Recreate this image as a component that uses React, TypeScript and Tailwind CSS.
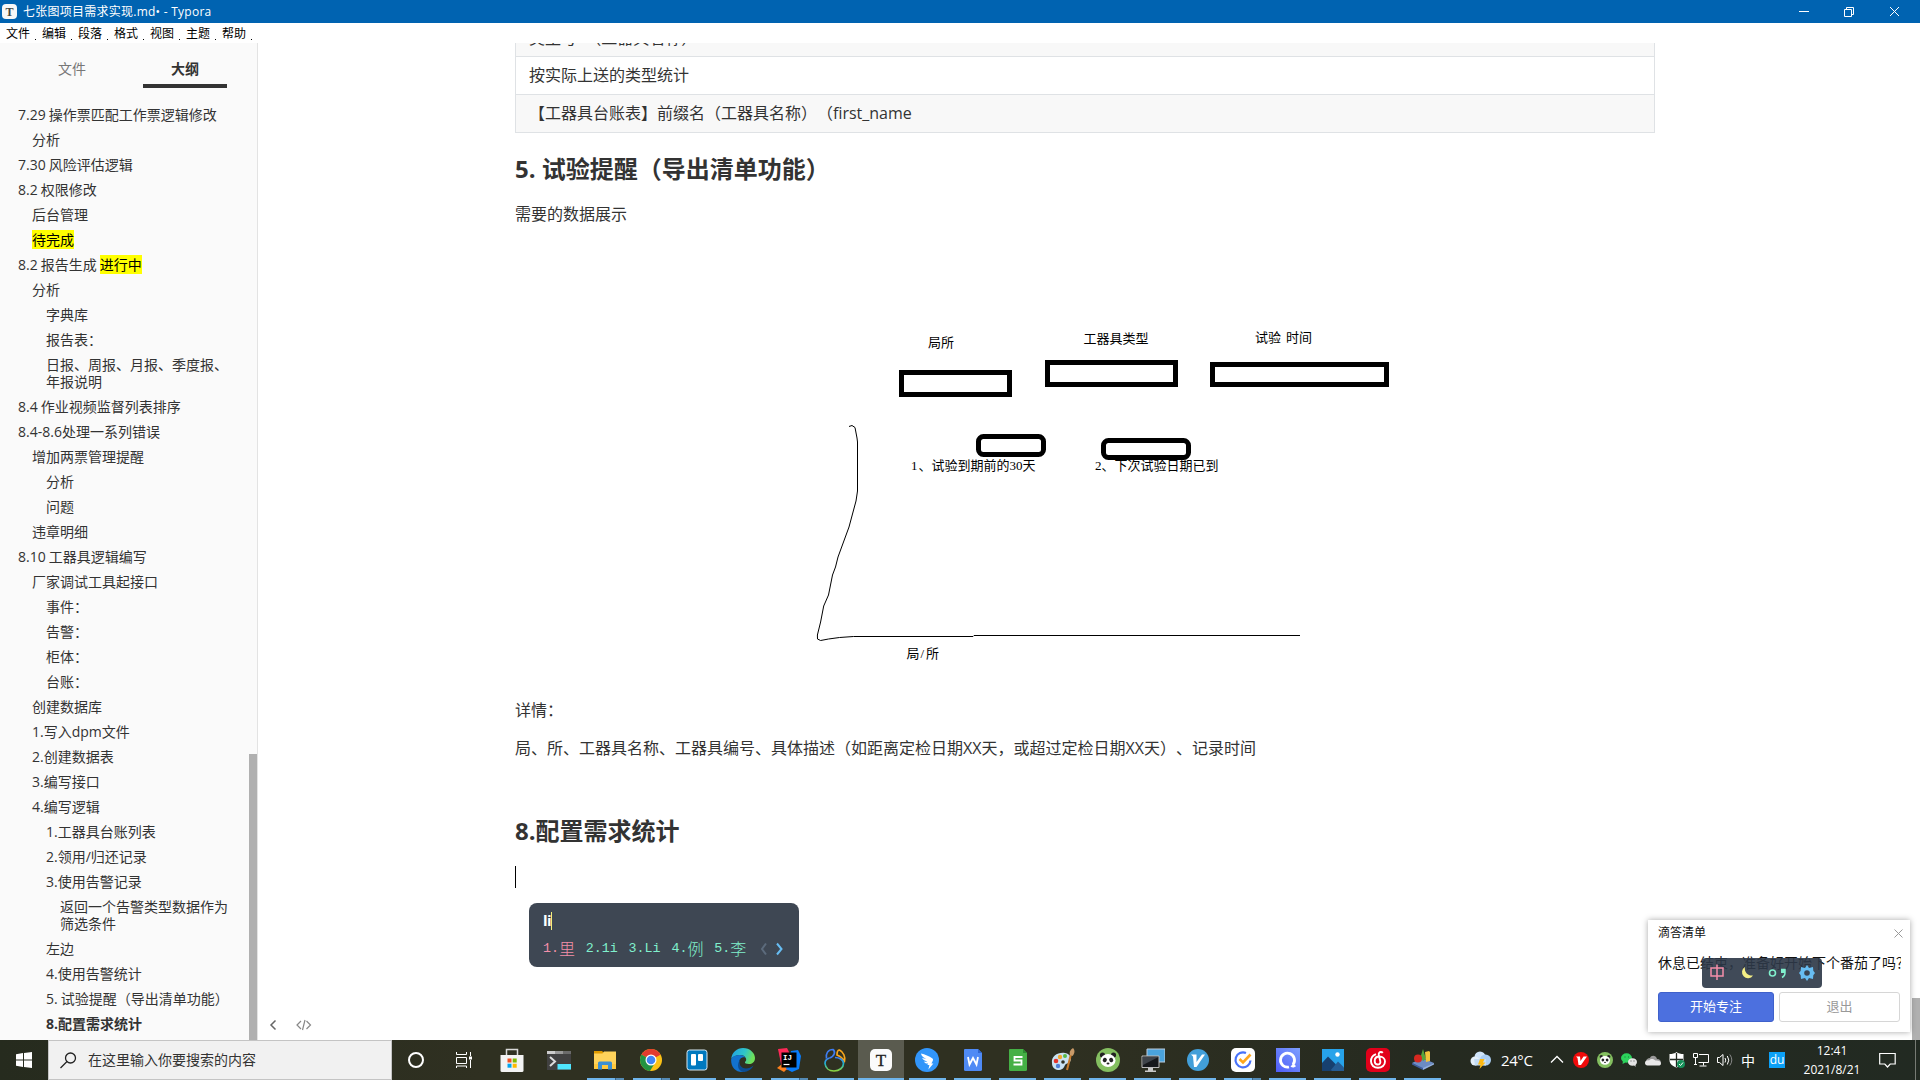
import React from "react";

type OutlineItem = { level: 0 | 1 | 2 | 3; lines: string[]; mark?: string; bold?: boolean };

const outline: OutlineItem[] = [
  { level: 0, lines: ["7.29 操作票匹配工作票逻辑修改"] },
  { level: 1, lines: ["分析"] },
  { level: 0, lines: ["7.30 风险评估逻辑"] },
  { level: 0, lines: ["8.2 权限修改"] },
  { level: 1, lines: ["后台管理"] },
  { level: 1, lines: [""], mark: "待完成" },
  { level: 0, lines: ["8.2 报告生成 "], mark: "进行中" },
  { level: 1, lines: ["分析"] },
  { level: 2, lines: ["字典库"] },
  { level: 2, lines: ["报告表："] },
  { level: 2, lines: ["日报、周报、月报、季度报、", "年报说明"] },
  { level: 0, lines: ["8.4 作业视频监督列表排序"] },
  { level: 0, lines: ["8.4-8.6处理一系列错误"] },
  { level: 1, lines: ["增加两票管理提醒"] },
  { level: 2, lines: ["分析"] },
  { level: 2, lines: ["问题"] },
  { level: 1, lines: ["违章明细"] },
  { level: 0, lines: ["8.10 工器具逻辑编写"] },
  { level: 1, lines: ["厂家调试工具起接口"] },
  { level: 2, lines: ["事件："] },
  { level: 2, lines: ["告警："] },
  { level: 2, lines: ["柜体："] },
  { level: 2, lines: ["台账："] },
  { level: 1, lines: ["创建数据库"] },
  { level: 1, lines: ["1.写入dpm文件"] },
  { level: 1, lines: ["2.创建数据表"] },
  { level: 1, lines: ["3.编写接口"] },
  { level: 1, lines: ["4.编写逻辑"] },
  { level: 2, lines: ["1.工器具台账列表"] },
  { level: 2, lines: ["2.领用/归还记录"] },
  { level: 2, lines: ["3.使用告警记录"] },
  { level: 3, lines: ["返回一个告警类型数据作为", "筛选条件"] },
  { level: 2, lines: ["左边"] },
  { level: 2, lines: ["4.使用告警统计"] },
  { level: 2, lines: ["5. 试验提醒（导出清单功能）"] },
  { level: 2, lines: ["8.配置需求统计"], bold: true },
];

const indent = ["pl-[18px]", "pl-8", "pl-[46px]", "pl-[60px]"];

function TitleBar() {
  return (
    <div className="flex h-[23px] shrink-0 items-center bg-[#0063b1] text-white">
      <div className="ml-0.5 flex h-[15px] w-[15px] items-center justify-center rounded-[4px] bg-[#f7f7f7] font-['Liberation_Serif',serif] text-[12px] leading-none font-bold text-[#444]">
        T
      </div>
      <div className="ml-1.5 text-[12px] leading-[22px] tracking-[0.25px] whitespace-pre">七张图项目需求实现.md• - Typora</div>
      <svg className="mr-5 ml-auto" width="102" height="12" viewBox="0 0 102 12" fill="none" stroke="#fff">
        <path d="M1 5.500h10M46.500 3.500h7v7h-7zM48.500 3V1.500h7v7H54M92 1l9 9M101 1l-9 9" />
      </svg>
    </div>
  );
}

function MenuBar() {
  return (
    <div className="flex h-5 shrink-0 bg-white pl-1.5 text-[12px] leading-[18px] text-black">
      {["文件", "编辑", "段落", "格式", "视图", "主题", "帮助"].map((m) => (
        <div key={m} className="flex w-9 items-end">
          <span className="w-[29px]">{m}</span>
          <span className="mb-[3px] h-px w-px bg-black" />
        </div>
      ))}
    </div>
  );
}

function Sidebar() {
  return (
    <div className="flex w-[258px] shrink-0 border-r border-[#e3e3e3] bg-[#fafafa] text-[14px] text-[#333]">
      <div className="w-[249px]">
        <div className="flex h-[45px] pl-[30px] text-center leading-[51px]">
          <div className="w-[84px] text-[#777]">文件</div>
          <div className="ml-[29px] w-[84px] border-b-4 border-[#333] font-bold">大纲</div>
        </div>
        <div className="pt-[14px]">
          {outline.map((o, i) => (
            <div
              key={i}
              className={`${indent[o.level]} py-1 leading-[17px] whitespace-pre [word-spacing:-0.6px] ${o.bold ? "font-bold" : ""}`}
            >
              {o.lines.map((l, j) => (
                <div key={j}>
                  {l}
                  {o.mark && <span className="-my-px inline-block h-[19px] bg-[#ff0] align-top leading-[19px] text-black">{o.mark}</span>}
                </div>
              ))}
            </div>
          ))}
        </div>
      </div>
      <div className="mt-[711px] w-2 bg-[#b0b0b0]" />
    </div>
  );
}

function Sketch() {
  return (
    <svg width="1141" height="473" viewBox="515 226 1141 473" className="block">
      <g fill="none" stroke="#000" strokeWidth="5">
        <rect x="901.5" y="372.5" width="108" height="22" />
        <rect x="1047.5" y="362.5" width="128" height="22" />
        <rect x="1212.5" y="364.5" width="174" height="20" />
        <rect x="978.5" y="436.5" width="65" height="18" rx="5" />
        <rect x="1103.5" y="440.5" width="85" height="17" rx="5" />
      </g>
      <path
        fill="none"
        stroke="#000"
        strokeWidth="1"
        d="M849 426.5L852 425.5L855 427.5L857 438L857.5 442V491L856 501L849 527L838 557L835.5 567L832.5 575L828.5 595L823.7 606L820.6 622L817.4 635L817.5 639L820.6 640.5L828.5 639L839.5 637.5L853.5 636.5H973L974 635.5H1300"
      />
      <g fontSize="13" fill="#000" className="font-['Liberation_Serif','Noto_Sans_CJK_SC',serif] whitespace-pre">
        <text x="928" y="346.5">局所</text>
        <text x="1083.5" y="342.5">工器具类型</text>
        <text x="1255" y="341.5">试验</text>
        <text x="1286" y="341.5">时间</text>
        <text x="911" y="469.5">
          1
          <tspan x="918.5">、试验到期前的</tspan>
          <tspan x="1009.5">30</tspan>
          <tspan x="1022.5">天</tspan>
        </text>
        <text x="1095" y="469.5">
          2
          <tspan x="1101.5">、下次试验日期已到</tspan>
        </text>
        <text x="906.5" y="658">局</text>
        <text x="920.500" y="658">/</text>
        <text x="926" y="658">所</text>
      </g>
    </svg>
  );
}

function Document() {
  return (
    <div className="flex min-w-0 flex-1 bg-white text-[16px] text-[#333]">
      <div className="flex w-[257px] items-end gap-[19px] pb-[7px] pl-[11px]">
        <svg width="8" height="16" viewBox="0 0 8 16" fill="none" stroke="#666" strokeWidth="1.5">
          <path d="M6.500 3.500L2 8l4.500 4.500" />
        </svg>
        <svg width="16" height="16" viewBox="0 0 16 16" fill="none" stroke="#888" strokeWidth="1.2">
          <path d="M5 4L1 8l4 4M10.500 4l4 4-4 4M9 3L6.500 13" />
        </svg>
      </div>
      <div className="w-[1140px]">
        <div className="border-x border-[#dfe2e5] leading-[36px] whitespace-pre">
          <div className="flex h-[14px] items-end overflow-hidden border-b border-[#dfe2e5] bg-[#f8f8f8] pl-[13px]">
            <div>类型号{"\u00a0\u00a0"}（工器具名称）</div>
          </div>
          <div className="h-[38px] border-b border-[#dfe2e5] pl-[13px]">按实际上送的类型统计</div>
          <div className="h-[38px] border-b border-[#dfe2e5] bg-[#f8f8f8] pl-[13px]">【工器具台账表】前缀名（工器具名称）（first_name</div>
        </div>
        <h3 className="mt-[18px] text-[24px] leading-9 font-bold">5. 试验提醒（导出清单功能）</h3>
        <p className="mt-[15px] leading-6">需要的数据展示</p>
        <Sketch />
        <p className="-mt-px leading-6">详情：</p>
        <p className="mt-3.5 leading-6">局、所、工器具名称、工器具编号、具体描述（如距离定检日期XX天，或超过定检日期XX天）、记录时间</p>
        <h3 className="mt-[53px] text-[24px] leading-9 font-bold">8.配置需求统计</h3>
        <div className="mt-[17px] h-[22px] w-px bg-black" />
      </div>
      <div className="mt-[955px] ml-auto w-2 bg-[#b0b0b0]" />
    </div>
  );
}

function CandidateWindow() {
  const items = [
    ["1.", "", "里"],
    ["2.", "1i", ""],
    ["3.", "Li", ""],
    ["4.", "", "例"],
    ["5.", "", "李"],
  ];
  return (
    <div className="absolute top-[903px] left-[529px] h-16 w-[270px] rounded-lg bg-[#3e4753] pl-3.5">
      <div className="flex h-[35px] items-center text-[15px] font-bold text-white">
        <span className="leading-none tracking-[-0.5px]">li</span>
        <span className="h-[18px] w-px bg-[#f2ee7e]" />
      </div>
      <div className="flex h-[22px] items-center">
        {items.map(([n, latin, han], i) => (
          <div key={n} className={`flex w-[42.8px] items-center ${i === 0 ? "text-[#f48fa9]" : "text-[#80f0cd]"}`}>
            <span className="font-['Liberation_Mono',monospace] text-[13.33px] leading-[22px]">
              {n}
              {latin}
            </span>
            <span className="text-[16px] leading-[20px] font-light">{han}</span>
          </div>
        ))}
        <svg width="24" height="14" viewBox="0 0 24 14" fill="none" strokeWidth="2" className="ml-[3px]">
          <path d="M6 1.500L2 7l4 5.500" stroke="#5c6b7c" />
          <path d="M17 1.500L21.500 7 17 12.500" stroke="#67bdf2" />
        </svg>
      </div>
    </div>
  );
}

function Toast() {
  return (
    <div className="absolute top-[920px] left-[1648px] h-28 w-[262px] bg-white px-2.5 pt-[5px] shadow-[0_0_6px_rgba(0,0,0,0.35)]">
      <div className="flex h-4 items-center justify-between text-[12px] leading-4 text-[#111]">
        滴答清单
        <svg width="9" height="9" viewBox="0 0 9 9" stroke="#999" className="-mr-[3px]">
          <path d="M.5.5l8 8M8.500.5l-8 8" />
        </svg>
      </div>
      <div className="mt-[11px] h-5 w-[243px] overflow-hidden text-[14px] leading-[22px] whitespace-nowrap text-[#111]">休息已结束，准备好开始下个番茄了吗？</div>
      <div className="mt-5 flex gap-[5px] text-center text-[13px] leading-[27px]">
        <div className="h-[30px] w-[116px] rounded-[3px] border border-[#3f61cb] bg-[#4c70df] text-white">开始专注</div>
        <div className="h-[30px] w-[121px] rounded-[3px] border border-[#d6d6d6] text-[#999]">退出</div>
      </div>
    </div>
  );
}

function ImeBar() {
  return (
    <div className="absolute top-[958px] left-[1702px] h-[30px] w-[120px] rounded-[4px] bg-[#2d3847]/91">
      <svg width="120" height="30" viewBox="0 0 120 30" fill="none">
        <path d="M9 10h12v8H9zM15 6.500v15.500" stroke="#f48fa9" strokeWidth="1.500" />
        <path d="M43 9a6 6 0 1 0 8 8.500A7 7 0 0 1 43 9z" fill="#f5ef86" />
        <circle cx="70.500" cy="15" r="3" stroke="#80f0cd" strokeWidth="1.600" />
        <path d="M79 11.500h4v3.500c0 2-1 3.500-3 4.500" stroke="#80f0cd" strokeWidth="1.500" />
        <path d="M79 11h4v4h-4z" fill="#80f0cd" />
        <path
          d="M105 7l2 3 4-1 .3 3.700L113 15l-1.700 2.300-.3 3.700-4-1-2 3-2-3-4 1-.3-3.700L97 15l1.700-2.300L99 9l4 1z"
          fill="#67bdf2"
        />
        <circle cx="105" cy="15" r="2.800" fill="#3a4452" />
      </svg>
    </div>
  );
}

const Svg = ({ children }: { children: React.ReactNode }) => (
  <svg width="24" height="24" viewBox="0 0 24 24" fill="none">
    {children}
  </svg>
);

const Panda = () => (
  <>
    <circle cx="12" cy="12" r="12" fill="#84bf60" />
    <circle cx="6.500" cy="7" r="2.600" fill="#222" />
    <circle cx="17.500" cy="7" r="2.600" fill="#222" />
    <ellipse cx="12" cy="12.500" rx="7.500" ry="6.500" fill="#fff" />
    <ellipse cx="8.800" cy="12" rx="2" ry="2.200" fill="#222" transform="rotate(30 8.800 12)" />
    <ellipse cx="15.200" cy="12" rx="2" ry="2.200" fill="#222" transform="rotate(-30 15.200 12)" />
    <ellipse cx="12" cy="15.500" rx="1.500" ry="1" fill="#222" />
  </>
);

const IconStore = () => (
  <Svg>
    <path d="M6.500 8V1.500h11V8" stroke="#d8d8d8" strokeWidth="1.500" />
    <path d="M.5 7h23v15.500a1.500 1.500 0 0 1-1.500 1.500H2a1.500 1.500 0 0 1-1.500-1.500z" fill="#f3f3f3" />
    <path d="M7.500 10.500h4v4h-4z" fill="#f05022" />
    <path d="M12.700 10.500h4v4h-4z" fill="#7fba00" />
    <path d="M7.500 15.700h4v4h-4z" fill="#00a4ef" />
    <path d="M12.700 15.700h4v4h-4z" fill="#ffb900" />
  </Svg>
);
const IconTerminal = () => (
  <Svg>
    <path d="M0 3h24v19H0z" fill="#414141" />
    <path d="M0 3h8v3H0z" fill="#ccc" />
    <path d="M8 3h8v3H8z" fill="#999" />
    <path d="M16 3h8v3h-8z" fill="#6b6b6b" />
    <path d="M3 9l5 4.500L3 18" stroke="#ddd" strokeWidth="2" />
    <path d="M10.500 16H24v5.500H10.500z" fill="#50e6ff" />
  </Svg>
);
const IconExplorer = () => (
  <Svg>
    <path d="M1 3h8l2 2v3H1z" fill="#e09b00" />
    <path d="M1 5.500h8.500l1.500-2h12V20H1z" fill="#ffd35b" />
    <path d="M1 16h22v5H1z" fill="#ffc83d" />
    <path d="M5 21.500V15a1.500 1.500 0 0 1 1.500-1.500h11A1.500 1.500 0 0 1 19 15v6.500h-4V17H9v4.500z" fill="#3b8fd4" />
  </Svg>
);
const IconChrome = () => (
  <Svg>
    <circle cx="12" cy="12" r="11" fill="#fbc116" />
    <path d="M12 12L2.500 6.500A11 11 0 0 1 21.500 6.500z" fill="#e33b2e" />
    <path d="M21.500 6.500H12v5z" fill="#e33b2e" />
    <path d="M2.500 6.500A11 11 0 0 0 11 23l5.500-9L12 12z" fill="#229342" />
    <circle cx="12" cy="12" r="5.500" fill="#fff" />
    <circle cx="12" cy="12" r="4.300" fill="#4285f4" />
  </Svg>
);
const IconTrello = () => (
  <Svg>
    <rect x="2" y="2" width="20" height="20" rx="2.500" fill="#0079bf" stroke="#d9e8f2" />
    <rect x="6" y="6" width="5" height="11.500" rx="1" fill="#fff" />
    <rect x="13" y="6" width="5" height="7" rx="1" fill="#fff" />
  </Svg>
);
const IconEdge = () => (
  <Svg>
    <defs>
      <linearGradient id="edgeA" x1="0" y1="0" x2="1" y2="0.300">
        <stop offset="0" stopColor="#1f9de8" />
        <stop offset=".6" stopColor="#2fc5c8" />
        <stop offset="1" stopColor="#6ee05a" />
      </linearGradient>
    </defs>
    <path d="M.2 11C1 4 6 0 12 0c7 0 12 5 12 10 0 4-3 6-6 6-3 0-4.500-1-4-2 1-1 1.500-2 1-3.500C14 8 12 7 9 7 5 7 1.500 9 .2 11z" fill="url(#edgeA)" />
    <path d="M.2 11C1.500 8.500 5 7 8.500 7c3 0 5 1 6 2.500C11 8.500 8 11 8 14.500c0 4 3 7.500 8 7.500-1.500 1-3 2-5 2C4 24-.5 18 .2 11z" fill="#1272cf" />
    <path d="M9.500 11C7 16 10 20.500 15 20.500c3 0 5-1 7.500-3C21 21 17 24 12.500 24 7 23 5 16.500 9.500 11z" fill="#0c4d93" />
  </Svg>
);
const IconIdea = () => (
  <Svg>
    <path d="M1 1l9-1 4 8-3 14-6-1z" fill="#fe2857" />
    <path d="M0 20l5-4 6 4-4 4z" fill="#fc801d" />
    <path d="M14 3l7-1 3 6-2 13-7 3-6-3z" fill="#087cfa" />
    <rect x="4.500" y="4.500" width="15" height="15" fill="#000" />
    <text x="6" y="12" fontSize="7.500" fontWeight="700" fill="#fff" className="font-['Liberation_Mono',monospace]">
      IJ
    </text>
    <path d="M6.500 16.500h6" stroke="#fff" strokeWidth="1.200" />
  </Svg>
);
const IconRings = () => (
  <Svg>
    <defs>
      <linearGradient id="rings" x1="0" y1="0" x2="0" y2="1">
        <stop offset="0" stopColor="#3f7df2" />
        <stop offset=".5" stopColor="#22b5c9" />
        <stop offset="1" stopColor="#8ed43c" />
      </linearGradient>
    </defs>
    <path d="M3.500 10.500C2.500 5.500 5 1.500 10 1.500c2.500 2 2 6.500-3.500 8.500" stroke="#3f7df2" strokeWidth="1.700" />
    <path d="M14 7c0-3 .5-5 2.500-5 4 2 6 7 5 11-2-3-4.500-5-7.500-6z" stroke="#f7a51c" strokeWidth="1.700" />
    <path d="M6.500 10C3 11 2 13 2 15.500 2.500 20 6 23 11 23c5.500 0 9.500-3.500 9.500-7.500S16 9.500 12 9.500" stroke="url(#rings)" strokeWidth="1.700" />
  </Svg>
);
const IconTypora = () => (
  <Svg>
    <rect x="1" y="1" width="22" height="22" rx="5" fill="#fbfbfb" />
    <text x="12" y="17.500" textAnchor="middle" fontSize="17" fill="#222" stroke="#222" strokeWidth=".3" className="font-['Liberation_Serif',serif]">
      T
    </text>
  </Svg>
);
const IconWing = () => (
  <Svg>
    <circle cx="12" cy="12" r="12" fill="#3296fa" />
    <path d="M6 5.500c4 1 8 2.500 11.500 5 1 .8.500 2-.3 3.500l-.8 1.500h2l-5 6 1-4.500h-2l.7-1.500c-2 .3-3.500-.5-4.300-2 1.500.3 2.500.2 3.500 0-3-.8-4.500-2-5.200-3.700 1.500.6 3 .8 4 .8C8 9.500 6.500 8 6 5.500z" fill="#fff" />
  </Svg>
);
const IconDoc = ({ fill, fold, d }: { fill: string; fold: string; d: string }) => (
  <Svg>
    <path d="M3.500 1H17l4 4v16.500a1.500 1.500 0 0 1-1.500 1.500h-15A1.500 1.500 0 0 1 3 21.500V2z" fill={fill} />
    <path d="M17 1l4 4h-4z" fill={fold} />
    <path d={d} stroke="#fff" strokeWidth="1.800" />
  </Svg>
);
const IconPaint = () => (
  <Svg>
    <path d="M1 15C0 8 7 4 14 5c6 1 7 6 5 9-2 2-4 1-5 3-1 3-3 5-7 5-4-.5-6-3-6-7z" fill="#c9e2f2" />
    <circle cx="5" cy="13" r="2.300" fill="#e5332a" />
    <circle cx="9" cy="9" r="2.200" fill="#f3a72e" />
    <circle cx="14" cy="8" r="2" fill="#57b947" />
    <circle cx="7" cy="18" r="2.200" fill="#4f7ed6" />
    <circle cx="12" cy="14" r="1.800" fill="#2f3021" />
    <path d="M20 6l-4 16" stroke="#c77a2b" strokeWidth="2" />
    <path d="M19 7c-1-3 0-5 3-7 2 2 2 5-.5 8z" fill="#c99a68" />
  </Svg>
);
const IconRemote = () => (
  <Svg>
    <path d="M6 1h18v13H6z" fill="#4aa3dc" stroke="#bcd" />
    <path d="M1 8h17v11.500H1z" fill="#16181b" stroke="#bbb" />
    <path d="M1.500 9h16L2 17z" fill="#3f444a" />
    <path d="M7 20h5v2.500h3V24H4v-1.500h3z" fill="#c9c9c9" />
  </Svg>
);
const IconVee = () => (
  <Svg>
    <circle cx="12" cy="12" r="11" fill="#429fd9" />
    <path d="M5 6.500h5.500V14L16 6.500h3L10.500 19H8L7 8.500z" fill="#fff" />
  </Svg>
);
const IconTick = () => (
  <Svg>
    <rect width="24" height="24" rx="5" fill="#fff" />
    <path d="M15 5a7.500 7.500 0 1 0 4.500 7.500" stroke="#4772fa" strokeWidth="2.200" />
    <path d="M8.500 11l3.500 3.500 7.500-8" stroke="#ffa71c" strokeWidth="2.600" />
  </Svg>
);
const IconQuark = () => (
  <Svg>
    <defs>
      <linearGradient id="quark" x1="0" y1="1" x2="1" y2="0">
        <stop offset="0" stopColor="#4f5cf7" />
        <stop offset="1" stopColor="#7da0ff" />
      </linearGradient>
    </defs>
    <path d="M0 0h24v24H0z" fill="url(#quark)" />
    <path d="M17 16.500A7 7 0 1 0 13 19" stroke="#fff" strokeWidth="2.800" />
    <path d="M14.500 18.800c2.500 1.200 4 .8 5.500-.8l-3-2.500z" fill="#fff" />
  </Svg>
);
const IconPhotos = () => (
  <Svg>
    <path d="M1 1h22v22H1z" fill="#27a3ea" />
    <path d="M1 15l6-6.500 8 8V23H1z" fill="#17406f" />
    <path d="M9 23l8-9.500 6 6V23z" fill="#255c94" />
    <path d="M1 18l4-1 6 6H1z" fill="#17406f" />
    <circle cx="16.500" cy="6.500" r="2.200" fill="#fff" />
  </Svg>
);
const IconMusic = () => (
  <Svg>
    <rect width="24" height="24" rx="5" fill="#e2001a" />
    <path
      d="M10 6.200C6.500 7.500 5 10.500 5 13.300 5 17 8 19.800 12 19.800s7-2.800 7-6.300c0-3-2.500-5-5.500-5S8.700 10.500 8.700 13s1.300 3.500 3 3.500c2 0 3-1.300 2.600-3.200L12.800 7c-.3-2 .7-3 2-3 .8 0 1.500.3 2 .9"
      stroke="#fff"
      strokeWidth="1.900"
    />
  </Svg>
);
const IconShapes = () => (
  <Svg>
    <path d="M1 15l10-5 12 5-11 6z" fill="#6c8cc4" />
    <path d="M1 15l11 5v2L1 16.500z" fill="#3e5d9e" />
    <path d="M23 15l-11 5v2l11-5.500z" fill="#93b0df" />
    <path d="M9.500 9L12 1l3 10-3 2z" fill="#56a53c" />
    <circle cx="7" cy="10.500" r="4" fill="#d7281f" />
    <path d="M14 4l4-1 1 1v9l-4 1z" fill="#f2c43a" />
  </Svg>
);

type AppEntry = { icon: React.ReactNode; wide?: boolean; multi?: boolean; idle?: boolean; active?: boolean };
const apps: AppEntry[] = [
  { icon: <IconTerminal />, wide: true, idle: true },
  { icon: <IconExplorer />, wide: true, multi: true },
  { icon: <IconChrome />, wide: true, multi: true },
  { icon: <IconTrello />, wide: true },
  { icon: <IconEdge />, wide: true },
  { icon: <IconIdea />, wide: true, multi: true },
  { icon: <IconRings />, wide: true },
  { icon: <IconTypora />, wide: true, active: true },
  { icon: <IconWing />, wide: true },
  { icon: <IconDoc fill="#4f8af5" fold="#2f66cf" d="M7 9l1.500 7.500L12 10l3.500 6.500L17 9" /> },
  { icon: <IconDoc fill="#45b045" fold="#2b8a30" d="M16.500 9H8.500v3.500h7v4h-8" /> },
  { icon: <IconPaint /> },
  {
    icon: (
      <Svg>
        <Panda />
      </Svg>
    ),
  },
  { icon: <IconRemote /> },
  { icon: <IconVee /> },
  { icon: <IconTick />, multi: true },
  { icon: <IconQuark /> },
  { icon: <IconPhotos /> },
  { icon: <IconMusic /> },
  { icon: <IconShapes /> },
];

function Tray() {
  return (
    <div className="ml-auto flex h-10 items-center text-white">
      <svg width="22" height="18" viewBox="0 0 22 18">
        <circle cx="10" cy="6" r="5.500" fill="#cfe4fa" />
        <circle cx="15.500" cy="9" r="5.500" fill="#a9cdf2" />
        <circle cx="5" cy="10" r="4.500" fill="#e4effa" />
        <path d="M4 8h12v6.500H5z" fill="#c3dcf5" />
        <path d="M10 8h4.500l-1.500 3.500h2.500L9.500 18l1-4.500H8z" fill="#fcb813" />
      </svg>
      <span className="ml-[9px] w-[48px] text-[15px] leading-10 tracking-[-0.4px]">24°C</span>
      <div className="flex">
        <svg width="16" height="16" viewBox="0 0 16 16" fill="none" stroke="#fff" strokeWidth="1.300">
          <path d="M2 10.500l6-6 6 6" />
        </svg>
        <svg width="16" height="16" viewBox="0 0 16 16" className="ml-2">
          <circle cx="8" cy="8" r="8" fill="#f00b0b" />
          <path d="M3 4.500h4L7.500 9l3-4.500H14L8 13H5.500L4.500 6z" fill="#fff" />
        </svg>
        <svg width="16" height="16" viewBox="0 0 24 24" className="ml-2">
          <Panda />
        </svg>
        <svg width="16" height="16" viewBox="0 0 16 16" className="ml-2">
          <ellipse cx="5.500" cy="6" rx="5.500" ry="4.700" fill="#2cd35c" />
          <path d="M2 9l-.5 3 3-1.500z" fill="#2cd35c" />
          <ellipse cx="11.500" cy="10" rx="4.500" ry="3.800" fill="#e4e4e4" />
          <path d="M13 13l1.500 2v-3z" fill="#e4e4e4" />
          <path d="M3.500 4.500h1v1h-1zM7 4.500h1v1H7z" fill="#137a33" />
          <path d="M9.500 8.500h1v1h-1zM12.500 8.500h1v1h-1z" fill="#555" />
        </svg>
        <svg width="16" height="16" viewBox="0 0 16 16" className="ml-2">
          <path d="M1 10c0-3 2-4 4-4 1-3 6-3 7 1 3 0 4 2 4 4z" fill="#9a9a9a" />
          <path d="M0 11c0-2 2-3 4-2.500C6 6 9 7 10.500 8.500 13 8 16 9 16 11.500c0 1.500-1 2-2.500 2h-11C1 13.500 0 12.500 0 11z" fill="#e8e8e8" />
        </svg>
        <svg width="16" height="16" viewBox="0 0 16 16" className="ml-2">
          <path d="M7.500 0C9 1.500 12 2 14.500 2v6c0 4-3 6-7 7.500C3.500 14 .5 12 .5 8V2C3 2 6 1.500 7.500 0z" fill="#fff" />
          <path d="M7.500 1v14M1 7.500h13" stroke="#232a22" strokeWidth="1.300" />
          <circle cx="12" cy="12" r="4" fill="#16915a" />
          <path d="M10 12l1.500 1.500 2.500-3" stroke="#fff" fill="none" />
        </svg>
        <svg width="16" height="16" viewBox="0 0 16 16" fill="none" stroke="#fff" className="ml-2">
          <path d="M6 2.500h9.500v8H5.500M.5 1.500h4v4h-4zM2.500 6v6.500M10.500 11v2.500M6.500 14h7M1 12.500h3" />
        </svg>
        <svg width="16" height="16" viewBox="0 0 16 16" fill="none" stroke="#fff" className="ml-2">
          <path d="M.5 5.500h2L6 2.500v11l-3.500-3h-2zM8 6q1.500 2 0 4.500M10.300 4q3 4 0 8.500" />
          <path d="M12.800 2.500q4 5.500 0 11" stroke="#888" />
        </svg>
      </div>
      <span className="ml-2 w-[28px] text-[14px] leading-[39px]">中</span>
      <div className="flex h-4 w-4 items-center justify-center bg-[#0ba0f7] text-[12px] leading-4">du</div>
      <div className="ml-[15px] w-16 text-center text-[12px] leading-[19px]">
        12:41
        <br />
        2021/8/21
      </div>
      <svg width="17" height="16" viewBox="0 0 17 16" fill="none" stroke="#fff" strokeWidth="1.200" className="ml-[15px]">
        <path d="M.7 1.500h15.500v10.500h-5L8.500 15l-2.700-3H.7z" />
      </svg>
      <span className="mr-1 ml-[19px] h-10 w-px bg-[#777b74]" />
    </div>
  );
}

function Taskbar() {
  return (
    <div className="flex h-10 shrink-0 bg-[linear-gradient(90deg,#262b1e_0%,#2f3021_25%,#2f3021_55%,#252a20_75%,#222a22_100%)]">
      <div className="flex w-12 items-center justify-center">
        <svg width="16" height="16" viewBox="0 0 16 16" fill="#fff">
          <path d="M0 2.200L7 1v6.500H0zM8 .9L16 0v7.500H8zM0 8.500h7V15l-7-1.200zM8 8.500h8V16l-8-1.100z" />
        </svg>
      </div>
      <div className="flex w-[344px] items-center border border-[#c4c4c4] bg-[#f1f1f1] pl-[11px]">
        <svg width="17" height="17" viewBox="0 0 17 17" fill="none" stroke="#222" strokeWidth="1.300">
          <circle cx="10.500" cy="6" r="5" />
          <path d="M7 9.500L.5 16" />
        </svg>
        <span className="ml-[11px] text-[14px] leading-10 text-[#333]">在这里输入你要搜索的内容</span>
      </div>
      <div className="flex w-12 items-center justify-center">
        <div className="h-4 w-4 rounded-full border-2 border-white" />
      </div>
      <div className="flex w-12 items-center justify-center">
        <svg width="16" height="16" viewBox="0 0 16 16" fill="none" stroke="#fff">
          <path d="M.5 0v2.500h10V0M.5 5.500h10v6H.5zM.5 16v-2h10v2M14.500 0v4M14.500 8v8" />
          <path d="M13 4.500h3v3h-3z" fill="#fff" stroke="none" />
        </svg>
      </div>
      <div className="flex w-12 items-center justify-center">
        <IconStore />
      </div>
      {apps.map((a, i) => (
        <div
          key={i}
          className={`flex shrink-0 flex-col items-center justify-between pt-2 ${a.wide ? "w-[46px]" : "w-[45px]"} ${a.active ? "bg-[#5a5b4f]" : ""}`}
        >
          {a.icon}
          {!a.idle && (
            <div className={`flex h-0.5 ${a.active ? "w-full" : "w-[37px]"}`}>
              <div className="flex-1 bg-[#6fb5ec]" />
              {a.multi && <div className="w-[9px] border-l border-[#3b6486] bg-[#558bb5]" />}
            </div>
          )}
        </div>
      ))}
      <Tray />
    </div>
  );
}

export default function App() {
  return (
    <div className="relative flex h-[1080px] w-[1920px] flex-col overflow-hidden bg-white font-['Open_Sans','Noto_Sans_CJK_SC',sans-serif] [text-spacing-trim:space-all]">
      <TitleBar />
      <MenuBar />
      <div className="flex min-h-0 flex-1 overflow-hidden">
        <Sidebar />
        <Document />
      </div>
      <Taskbar />
      <CandidateWindow />
      <Toast />
      <ImeBar />
    </div>
  );
}
